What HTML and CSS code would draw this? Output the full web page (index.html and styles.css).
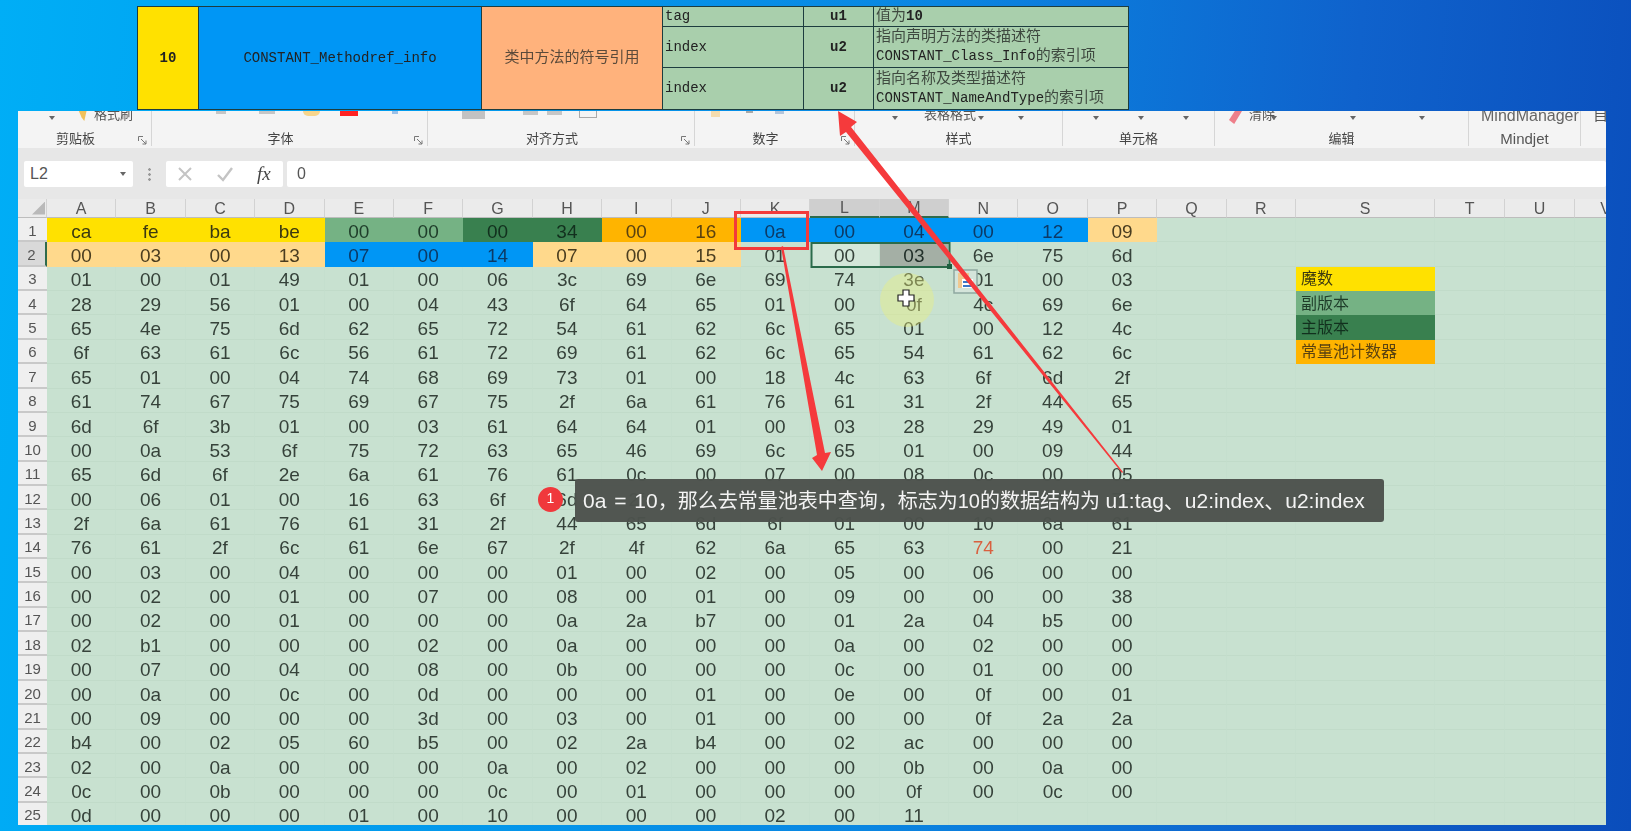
FILE: index.html
```html
<!DOCTYPE html>
<html lang="zh-CN">
<head>
  <meta charset="UTF-8">
  <title>Class文件十六进制分析</title>
  <link rel="stylesheet" href="styles.css">
</head>
<body>

  <table class="cp-table">
    <colgroup>
      <col class="cp-tag"><col class="cp-name"><col class="cp-desc"><col class="cp-field"><col class="cp-size"><col class="cp-note">
    </colgroup>
    <tr class="cp-r1">
      <td rowspan="3" class="cp-yellow cp-center cp-bold">10</td>
      <td rowspan="3" class="cp-blue cp-center">CONSTANT_Methodref_info</td>
      <td rowspan="3" class="cp-orange cp-center zh">类中方法的符号引用</td>
      <td>tag</td>
      <td class="cp-center cp-bold">u1</td>
      <td><span class="zh">值为</span><b>10</b></td>
    </tr>
    <tr class="cp-r2">
      <td>index</td>
      <td class="cp-center cp-bold">u2</td>
      <td><span class="zh">指向声明方法的类描述符</span><br>CONSTANT_Class_Info<span class="zh">的索引项</span></td>
    </tr>
    <tr class="cp-r3">
      <td>index</td>
      <td class="cp-center cp-bold">u2</td>
      <td><span class="zh">指向名称及类型描述符</span><br>CONSTANT_NameAndType<span class="zh">的索引项</span></td>
    </tr>
  </table>

  <div class="window">
    <div class="ribbon">
      <div class="group launch g-clip">
        <div class="tools"><i class="caret c-clip"></i><i class="brush"></i><span class="tool-text">格式刷</span></div>
        <div class="label">剪贴板</div>
        <svg class="launcher" width="9" height="9" viewBox="0 0 9 9"><path d="M.5 5V.5H5M3 3l5 5M8 4.5V8H4.500" stroke="#777" fill="none"/></svg>
      </div>
      <div class="group launch g-font">
        <div class="tools"><i class="frag f1"></i><i class="frag f2"></i><i class="frag f3"></i><i class="frag f4"></i><i class="frag f5"></i></div>
        <div class="label">字体</div>
        <svg class="launcher" width="9" height="9" viewBox="0 0 9 9"><path d="M.5 5V.5H5M3 3l5 5M8 4.5V8H4.500" stroke="#777" fill="none"/></svg>
      </div>
      <div class="group launch g-align">
        <div class="tools"><i class="frag a1"></i><i class="frag a2"></i><i class="frag a3"></i><i class="frag a4"></i></div>
        <div class="label">对齐方式</div>
        <svg class="launcher" width="9" height="9" viewBox="0 0 9 9"><path d="M.5 5V.5H5M3 3l5 5M8 4.5V8H4.500" stroke="#777" fill="none"/></svg>
      </div>
      <div class="group launch g-num">
        <div class="tools"><i class="frag n1"></i><i class="frag n2"></i><i class="frag n3"></i></div>
        <div class="label">数字</div>
        <svg class="launcher" width="9" height="9" viewBox="0 0 9 9"><path d="M.5 5V.5H5M3 3l5 5M8 4.5V8H4.500" stroke="#777" fill="none"/></svg>
      </div>
      <div class="group g-style">
        <div class="tools"><i class="caret c-s1"></i><span class="tool-text t-table">表格格式</span><i class="caret c-s2"></i><i class="caret c-s3"></i></div>
        <div class="label">样式</div>
      </div>
      <div class="group g-cell">
        <div class="tools"><i class="caret c-c1"></i><i class="caret c-c2"></i><i class="caret c-c3"></i></div>
        <div class="label">单元格</div>
      </div>
      <div class="group g-edit">
        <div class="tools"><i class="eraser"></i><span class="tool-text t-clear">清除</span><i class="caret c-e1"></i><i class="caret c-e2"></i><i class="caret c-e3"></i></div>
        <div class="label">编辑</div>
      </div>
      <div class="group g-mind">
        <div class="tools"><span class="tool-text t-mind">MindManager</span></div>
        <div class="label label-big">Mindjet</div>
      </div>
      <div class="group g-last">
        <div class="tools"><span class="tool-text t-last">自</span></div>
      </div>
    </div>

    <div class="formula-bar">
      <div class="name-box"><span>L2</span><i class="caret"></i></div>
      <div class="dots"></div>
      <div class="fx-box">
        <svg width="16" height="16" viewBox="0 0 16 16"><path d="M2 2 14 14M14 2 2 14" stroke="#c4c4c4" stroke-width="2" fill="none"/></svg>
        <svg width="18" height="16" viewBox="0 0 18 16"><path d="M2 9 7 14 16 2" stroke="#c4c4c4" stroke-width="2.4" fill="none"/></svg>
        <span class="fx">fx</span>
      </div>
      <div class="formula-input">0</div>
    </div>

    <table class="sheet">
      <colgroup>
        <col class="col-head">
        <col class="col-n" span="18">
        <col class="col-s">
        <col class="col-t" span="2">
        <col class="col-v">
      </colgroup>
      <tr class="letters">
        <th class="corner"><i></i></th>
        <th>A</th><th>B</th><th>C</th><th>D</th><th>E</th><th>F</th><th>G</th><th>H</th><th>I</th><th>J</th><th>K</th><th class="col-sel">L</th><th class="col-sel">M</th><th>N</th><th>O</th><th>P</th><th>Q</th><th>R</th><th>S</th><th>T</th><th>U</th><th>V</th>
      </tr>
      <tr>
        <th>1</th>
        <td class="magic">ca</td><td class="magic">fe</td><td class="magic">ba</td><td class="magic">be</td><td class="minor">00</td><td class="minor">00</td><td class="major">00</td><td class="major">34</td><td class="count">00</td><td class="count">16</td><td class="blue">0a</td><td class="blue">00</td><td class="blue">04</td><td class="blue">00</td><td class="blue">12</td><td class="sand">09</td><td></td><td></td><td></td><td></td><td></td><td></td>
      </tr>
      <tr>
        <th class="row-sel">2</th>
        <td class="sand">00</td><td class="sand">03</td><td class="sand">00</td><td class="sand">13</td><td class="blue">07</td><td class="blue">00</td><td class="blue">14</td><td class="sand">07</td><td class="sand">00</td><td class="sand">15</td><td>01</td><td class="active">00</td><td class="picked">03</td><td>6e</td><td>75</td><td>6d</td><td></td><td></td><td></td><td></td><td></td><td></td>
      </tr>
      <tr>
        <th>3</th>
        <td>01</td><td>00</td><td>01</td><td>49</td><td>01</td><td>00</td><td>06</td><td>3c</td><td>69</td><td>6e</td><td>69</td><td>74</td><td>3e</td><td>01</td><td>00</td><td>03</td><td></td><td></td><td class="legend magic">魔数</td><td></td><td></td><td></td>
      </tr>
      <tr>
        <th>4</th>
        <td>28</td><td>29</td><td>56</td><td>01</td><td>00</td><td>04</td><td>43</td><td>6f</td><td>64</td><td>65</td><td>01</td><td>00</td><td>0f</td><td>4c</td><td>69</td><td>6e</td><td></td><td></td><td class="legend minor">副版本</td><td></td><td></td><td></td>
      </tr>
      <tr>
        <th>5</th>
        <td>65</td><td>4e</td><td>75</td><td>6d</td><td>62</td><td>65</td><td>72</td><td>54</td><td>61</td><td>62</td><td>6c</td><td>65</td><td>01</td><td>00</td><td>12</td><td>4c</td><td></td><td></td><td class="legend major">主版本</td><td></td><td></td><td></td>
      </tr>
      <tr>
        <th>6</th>
        <td>6f</td><td>63</td><td>61</td><td>6c</td><td>56</td><td>61</td><td>72</td><td>69</td><td>61</td><td>62</td><td>6c</td><td>65</td><td>54</td><td>61</td><td>62</td><td>6c</td><td></td><td></td><td class="legend count">常量池计数器</td><td></td><td></td><td></td>
      </tr>
      <tr>
        <th>7</th>
        <td>65</td><td>01</td><td>00</td><td>04</td><td>74</td><td>68</td><td>69</td><td>73</td><td>01</td><td>00</td><td>18</td><td>4c</td><td>63</td><td>6f</td><td>6d</td><td>2f</td><td></td><td></td><td></td><td></td><td></td><td></td>
      </tr>
      <tr>
        <th>8</th>
        <td>61</td><td>74</td><td>67</td><td>75</td><td>69</td><td>67</td><td>75</td><td>2f</td><td>6a</td><td>61</td><td>76</td><td>61</td><td>31</td><td>2f</td><td>44</td><td>65</td><td></td><td></td><td></td><td></td><td></td><td></td>
      </tr>
      <tr>
        <th>9</th>
        <td>6d</td><td>6f</td><td>3b</td><td>01</td><td>00</td><td>03</td><td>61</td><td>64</td><td>64</td><td>01</td><td>00</td><td>03</td><td>28</td><td>29</td><td>49</td><td>01</td><td></td><td></td><td></td><td></td><td></td><td></td>
      </tr>
      <tr>
        <th>10</th>
        <td>00</td><td>0a</td><td>53</td><td>6f</td><td>75</td><td>72</td><td>63</td><td>65</td><td>46</td><td>69</td><td>6c</td><td>65</td><td>01</td><td>00</td><td>09</td><td>44</td><td></td><td></td><td></td><td></td><td></td><td></td>
      </tr>
      <tr>
        <th>11</th>
        <td>65</td><td>6d</td><td>6f</td><td>2e</td><td>6a</td><td>61</td><td>76</td><td>61</td><td>0c</td><td>00</td><td>07</td><td>00</td><td>08</td><td>0c</td><td>00</td><td>05</td><td></td><td></td><td></td><td></td><td></td><td></td>
      </tr>
      <tr>
        <th>12</th>
        <td>00</td><td>06</td><td>01</td><td>00</td><td>16</td><td>63</td><td>6f</td><td>6d</td><td>2f</td><td>61</td><td>74</td><td>67</td><td>75</td><td>69</td><td>67</td><td>75</td><td></td><td></td><td></td><td></td><td></td><td></td>
      </tr>
      <tr>
        <th>13</th>
        <td>2f</td><td>6a</td><td>61</td><td>76</td><td>61</td><td>31</td><td>2f</td><td>44</td><td>65</td><td>6d</td><td>6f</td><td>01</td><td>00</td><td>10</td><td>6a</td><td>61</td><td></td><td></td><td></td><td></td><td></td><td></td>
      </tr>
      <tr>
        <th>14</th>
        <td>76</td><td>61</td><td>2f</td><td>6c</td><td>61</td><td>6e</td><td>67</td><td>2f</td><td>4f</td><td>62</td><td>6a</td><td>65</td><td>63</td><td class="warn">74</td><td>00</td><td>21</td><td></td><td></td><td></td><td></td><td></td><td></td>
      </tr>
      <tr>
        <th>15</th>
        <td>00</td><td>03</td><td>00</td><td>04</td><td>00</td><td>00</td><td>00</td><td>01</td><td>00</td><td>02</td><td>00</td><td>05</td><td>00</td><td>06</td><td>00</td><td>00</td><td></td><td></td><td></td><td></td><td></td><td></td>
      </tr>
      <tr>
        <th>16</th>
        <td>00</td><td>02</td><td>00</td><td>01</td><td>00</td><td>07</td><td>00</td><td>08</td><td>00</td><td>01</td><td>00</td><td>09</td><td>00</td><td>00</td><td>00</td><td>38</td><td></td><td></td><td></td><td></td><td></td><td></td>
      </tr>
      <tr>
        <th>17</th>
        <td>00</td><td>02</td><td>00</td><td>01</td><td>00</td><td>00</td><td>00</td><td>0a</td><td>2a</td><td>b7</td><td>00</td><td>01</td><td>2a</td><td>04</td><td>b5</td><td>00</td><td></td><td></td><td></td><td></td><td></td><td></td>
      </tr>
      <tr>
        <th>18</th>
        <td>02</td><td>b1</td><td>00</td><td>00</td><td>00</td><td>02</td><td>00</td><td>0a</td><td>00</td><td>00</td><td>00</td><td>0a</td><td>00</td><td>02</td><td>00</td><td>00</td><td></td><td></td><td></td><td></td><td></td><td></td>
      </tr>
      <tr>
        <th>19</th>
        <td>00</td><td>07</td><td>00</td><td>04</td><td>00</td><td>08</td><td>00</td><td>0b</td><td>00</td><td>00</td><td>00</td><td>0c</td><td>00</td><td>01</td><td>00</td><td>00</td><td></td><td></td><td></td><td></td><td></td><td></td>
      </tr>
      <tr>
        <th>20</th>
        <td>00</td><td>0a</td><td>00</td><td>0c</td><td>00</td><td>0d</td><td>00</td><td>00</td><td>00</td><td>01</td><td>00</td><td>0e</td><td>00</td><td>0f</td><td>00</td><td>01</td><td></td><td></td><td></td><td></td><td></td><td></td>
      </tr>
      <tr>
        <th>21</th>
        <td>00</td><td>09</td><td>00</td><td>00</td><td>00</td><td>3d</td><td>00</td><td>03</td><td>00</td><td>01</td><td>00</td><td>00</td><td>00</td><td>0f</td><td>2a</td><td>2a</td><td></td><td></td><td></td><td></td><td></td><td></td>
      </tr>
      <tr>
        <th>22</th>
        <td>b4</td><td>00</td><td>02</td><td>05</td><td>60</td><td>b5</td><td>00</td><td>02</td><td>2a</td><td>b4</td><td>00</td><td>02</td><td>ac</td><td>00</td><td>00</td><td>00</td><td></td><td></td><td></td><td></td><td></td><td></td>
      </tr>
      <tr>
        <th>23</th>
        <td>02</td><td>00</td><td>0a</td><td>00</td><td>00</td><td>00</td><td>0a</td><td>00</td><td>02</td><td>00</td><td>00</td><td>00</td><td>0b</td><td>00</td><td>0a</td><td>00</td><td></td><td></td><td></td><td></td><td></td><td></td>
      </tr>
      <tr>
        <th>24</th>
        <td>0c</td><td>00</td><td>0b</td><td>00</td><td>00</td><td>00</td><td>0c</td><td>00</td><td>01</td><td>00</td><td>00</td><td>00</td><td>0f</td><td>00</td><td>0c</td><td>00</td><td></td><td></td><td></td><td></td><td></td><td></td>
      </tr>
      <tr>
        <th>25</th>
        <td>0d</td><td>00</td><td>00</td><td>00</td><td>01</td><td>00</td><td>10</td><td>00</td><td>00</td><td>00</td><td>02</td><td>00</td><td>11</td><td></td><td></td><td></td><td></td><td></td><td></td><td></td><td></td><td></td>
      </tr>
    </table>
  </div>

  <!-- annotations drawn on top of the video frame -->
  <svg class="marks" width="1631" height="831" viewBox="0 0 1631 831">
    <rect x="811.5" y="243" width="138" height="24" fill="none" stroke="#2b6b4b" stroke-width="2"/>
    <rect x="947" y="264" width="5" height="5" fill="#1f5f40"/>
    <circle cx="907" cy="300" r="27" fill="#ecf07a" opacity="0.4"/>
    <rect x="954" y="270" width="23" height="23" fill="#d4e4da" stroke="#8ea8a0" stroke-width="1.5"/>
    <rect x="958" y="273" width="11" height="15" fill="#f0c890"/>
    <rect x="962" y="279" width="11" height="9" fill="#fff"/>
    <rect x="963" y="281" width="9" height="2" fill="#3c78c8"/>
    <rect x="963" y="285" width="9" height="2" fill="#3c78c8"/>
    <path d="M903 290h6v5h5v6h-5v5h-6v-5h-5v-6h5z" fill="#fff" stroke="#222" stroke-width="1.2"/>
    <rect x="735.5" y="212.5" width="72" height="36" fill="none" stroke="#f33b3b" stroke-width="3"/>
    <polygon points="838,111 857,122 851,127 1123,472 1122,473 846,132 840,136" fill="#f53a3c"/>
    <polygon points="822,471 831,452 825,453 783,246 781,247 817,455 812,458" fill="#f53a3c"/>
  </svg>

  <div class="badge">1</div>
  <div class="caption"><span class="latin">0a = 10</span>，那么去常量池表中查询，标志为10的数据结构为 <span class="latin">u1:tag、u2:index、u2:index</span></div>

</body>
</html>
```

FILE: styles.css
```css
html, body {
  margin: 0;
  height: 831px;
  overflow: hidden;
}

body {
  position: relative;
  font-family: "Liberation Sans", "Noto Sans CJK SC", sans-serif;
  background: linear-gradient(95deg, #00aef6 0%, #00a0f0 20%, #0a86e2 55%, #0f62cc 80%, #0a4dbb 100%);
  filter: blur(0.4px);
}

/* constant pool table pasted above the window */
.cp-table {
  margin: 6px 0 0 137px;
  width: 992px;
  height: 103px;
  table-layout: fixed;
  border-collapse: collapse;
  background-color: #a9cfac;
  font: 14px/19px "Liberation Mono", "Noto Sans CJK SC", monospace;
  color: #222;
}

.cp-table td {
  padding: 0 2px;
  border: 1px solid #1d3d3f;
  white-space: nowrap;
  overflow: hidden;
}

.cp-tag { width: 61px; }
.cp-name { width: 283px; }
.cp-desc { width: 181px; }
.cp-field { width: 141px; }
.cp-size { width: 70px; }

.cp-r1 { height: 20px; }
.cp-r2 { height: 41px; }
.cp-r3 { height: 42px; }

.cp-table .zh {
  font-size: 15px;
  color: #3f4a40;
}

.cp-center { text-align: center; }
.cp-bold { font-weight: bold; }
.cp-yellow { background-color: #ffe100; }
.cp-blue { background-color: #0096f5; }
.cp-table .cp-orange { background-color: #ffb27c; color: #5b4a3a; }

/* excel window */
.window {
  margin: 1px 0 0 18px;
  width: 1588px;
  height: 714px;
  overflow: hidden;
  background-color: #c8e1d0;
}

.ribbon {
  display: flex;
  height: 37px;
  background-color: #f4f4f4;
  color: #444;
}

.group {
  position: relative;
  box-sizing: border-box;
  height: 35px;
  border-right: 1px solid #d6d6d6;
}

.group.launch { padding-right: 18px; }

.g-clip { width: 134px; }
.g-font { width: 276px; }
.g-align { width: 267px; }
.g-num { width: 160px; }
.g-style { width: 208px; }
.g-cell { width: 152px; }
.g-edit { width: 254px; }
.g-mind { width: 112px; }
.g-last { width: 25px; border-right: 0; }

.tools {
  display: flex;
  align-items: flex-start;
  height: 19px;
  overflow: hidden;
}

.label {
  font-size: 13px;
  line-height: 17px;
  text-align: center;
}

.label-big {
  font-size: 15px;
  color: #555;
}

.launcher {
  position: absolute;
  right: 4px;
  bottom: 1px;
}

.tool-text {
  margin-top: -4px;
  font-size: 13px;
  line-height: 16px;
  color: #555;
  white-space: nowrap;
}

.caret {
  width: 0;
  height: 0;
  margin-top: 5px;
  border: 3px solid transparent;
  border-top: 4px solid #666;
  border-bottom: 0;
}

.frag { display: block; background-color: #c6c6c6; }
.f1 { width: 10px; height: 3px; margin-left: 64px; }
.f2 { width: 16px; height: 3px; margin-left: 33px; }
.f3 { width: 17px; height: 5px; margin-left: 28px; background-color: #f7d58c; border-radius: 0 0 8px 8px; }
.f4 { width: 18px; height: 5px; margin-left: 20px; background-color: #f22; }
.f5 { width: 6px; height: 3px; margin-left: 34px; background-color: #9cc0e8; }
.a1 { width: 23px; height: 8px; margin-left: 34px; background-color: #c2c2c2; }
.a2 { width: 15px; height: 4px; margin-left: 38px; }
.a3 { width: 15px; height: 4px; margin-left: 9px; }
.a4 { width: 16px; height: 6px; margin-left: 17px; background-color: transparent; border: 1px solid #aaa; border-top: 0; }
.n1 { width: 9px; height: 6px; margin-left: 16px; background-color: #f5dcae; }
.n2 { width: 7px; height: 2px; margin-left: 26px; background-color: #aaa; }
.n3 { width: 9px; height: 3px; margin-left: 22px; background-color: #b4c6dc; }

.brush {
  width: 11px;
  height: 12px;
  margin-top: -2px;
  margin-left: 23px;
  margin-right: 7px;
  background-color: #f0c15c;
  clip-path: polygon(0 0, 100% 0, 70% 100%, 40% 70%);
}

.eraser {
  width: 13px;
  height: 13px;
  margin-left: 14px;
  margin-right: 7px;
  background-color: #ee7f8a;
  clip-path: polygon(45% 0, 100% 0, 40% 100%, 0 70%);
}

.c-clip { margin-left: 31px; }
.c-s1 { margin-left: 37px; }
.t-table { margin-left: 26px; }
.c-s2 { margin-left: 2px; }
.c-s3 { margin-left: 34px; }
.c-c1 { margin-left: 30px; }
.c-c2 { margin-left: 39px; }
.c-c3 { margin-left: 39px; }
.c-e1 { margin-left: -4px; }
.c-e2 { margin-left: 73px; }
.c-e3 { margin-left: 63px; }
.t-mind { margin-top: -3px; margin-left: 12px; font-size: 16px; color: #666; }
.t-last { margin-left: 12px; font-size: 15px; }

.formula-bar {
  display: flex;
  box-sizing: border-box;
  height: 51px;
  padding: 13px 0 12px 6px;
  background-color: #e7e7e7;
}

.name-box, .fx-box, .formula-input {
  height: 26px;
  background-color: #fff;
  border-radius: 2px;
  font-size: 16px;
  line-height: 26px;
  color: #555;
}

.name-box {
  display: flex;
  align-items: center;
  justify-content: space-between;
  box-sizing: border-box;
  width: 109px;
  padding: 0 7px 0 6px;
}

.name-box .caret { margin-top: 0; }

.dots {
  width: 3px;
  height: 15px;
  margin: 6px 15px 0 15px;
  background: radial-gradient(circle, #999 1.2px, transparent 1.5px) 0 0 / 3px 5px;
}

.fx-box {
  display: flex;
  align-items: center;
  gap: 23px;
  box-sizing: border-box;
  width: 117px;
  padding-left: 11px;
}

.fx {
  font: italic 19px "Liberation Serif", serif;
  color: #444;
}

.formula-input {
  flex: 1;
  margin-left: 4px;
  padding-left: 10px;
}

/* worksheet */
.sheet {
  width: 1619px;
  height: 628px;
  table-layout: fixed;
  border-collapse: separate;
  border-spacing: 0;
  font-size: 19px;
  color: #36423a;
}

.col-head { width: 29px; }
.col-n { width: 69.4px; }
.col-s { width: 139px; }
.col-t { width: 70px; }
.col-v { width: 62px; }

.sheet td {
  box-sizing: border-box;
  padding: 4px 0 0;
  text-align: center;
  line-height: 18px;
  overflow: hidden;
  border-bottom: 1px solid #c1dbc9;
  border-right: 1px solid #c5dfce;
}

.sheet th {
  box-sizing: border-box;
  padding: 3px 0 0;
  text-align: center;
  font-weight: normal;
  font-size: 15px;
  line-height: 18px;
  color: #555;
  background-color: #efefef;
  border-bottom: 2px solid #c9c9c9;
}

.letters { height: 19px; }

.sheet .letters th {
  padding: 0;
  font-size: 16px;
  line-height: 17px;
  background-color: #ebebeb;
  border-right: 1px solid #d2d2d2;
  border-bottom: 1px solid #bdbdbd;
}

.sheet .letters .col-sel {
  background-color: #cfcfcf;
  border-bottom: 2px solid #2f6b4c;
}

.corner i {
  display: block;
  width: 13px;
  height: 13px;
  margin-left: 14px;
  background-color: #b9b9b9;
  clip-path: polygon(100% 0, 100% 100%, 0 100%);
}

.sheet .row-sel {
  background-color: #d9d9d9;
  border-right: 2px solid #2f6b4c;
}

.sheet .magic { background-color: #ffe100; border-color: #ffe100; color: #3c3a10; }
.sheet .minor { background-color: #75b284; border-color: #75b284; color: #1f3d2a; }
.sheet .major { background-color: #39804f; border-color: #39804f; color: #12301e; }
.sheet .count { background-color: #ffb400; border-color: #ffb400; color: #5a4210; }
.sheet .blue { background-color: #0096f5; border-color: #0096f5; color: #0c3a66; }
.sheet .sand { background-color: #ffd98c; border-color: #ffd98c; color: #4a3d20; }
.sheet .active { background-color: #d3e7d9; }
.sheet .picked { background-color: #a4afa5; color: #22302a; }
.sheet .warn { color: #d9603f; }

.sheet .legend {
  padding: 2px 0 0 5px;
  text-align: left;
  font-size: 16px;
}

/* overlays */
.marks {
  position: absolute;
  top: 0;
  left: 0;
  pointer-events: none;
}

.badge {
  position: absolute;
  left: 538px;
  top: 487px;
  width: 25px;
  height: 25px;
  border-radius: 50%;
  background-color: #f0383c;
  color: #fff;
  font-size: 14px;
  line-height: 23px;
  text-align: center;
}

.caption {
  position: absolute;
  left: 575px;
  top: 479px;
  width: 809px;
  height: 43px;
  box-sizing: border-box;
  padding-left: 8px;
  border-radius: 3px;
  background-color: rgba(76, 82, 76, 0.97);
  color: #f4f4f4;
  font-size: 20px;
  line-height: 43px;
  white-space: nowrap;
}

.caption .latin {
  font-size: 21px;
  word-spacing: 2px;
}
```
